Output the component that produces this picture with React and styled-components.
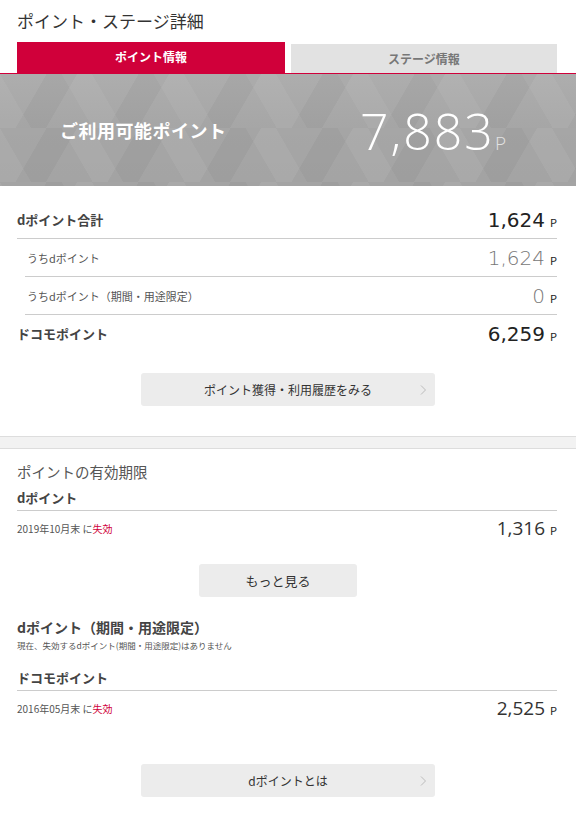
import React from 'react'
import styled, { createGlobalStyle } from 'styled-components'

const GlobalStyle = createGlobalStyle`
	body {
		margin: 0;
		background: #fff;
		font-family: 'Noto Sans CJK JP', 'Noto Sans', sans-serif;
		color: #333;
	}
`

const Page = styled.div`
	width: 576px;
	padding-bottom: 20px;
`
const Header = styled.header`
	padding: 9px 19px 0 17px;
	border-bottom: 1px solid #d0003a;
`
const PageTitle = styled.h1`
	margin: 0 0 9px;
	font-size: 17px;
	line-height: 24px;
	font-weight: 400;
	color: #333;
`
const Tabs = styled.div`
	display: grid;
	grid-template-columns: 268px 1fr;
	gap: 6px;
	align-items: end;
`
const Tab = styled.div`
	height: ${(p) => (p.active ? '31px' : '29px')};
	line-height: 29px;
	text-align: center;
	font-size: 12px;
	font-weight: 700;
	background: ${(p) => (p.active ? '#d0003a' : '#e2e2e2')};
	color: ${(p) => (p.active ? '#fff' : '#777')};
`
const Hero = styled.div`
	height: 112px;
	display: flex;
	align-items: center;
	justify-content: space-between;
	padding: 0 70px 0 60px;
	background-color: #a9a9a9;
	background-image:
		linear-gradient(60deg, rgba(255, 255, 255, 0.05) 25%, transparent 25.5%, transparent 75%, rgba(255, 255, 255, 0.05) 75.5%),
		linear-gradient(120deg, rgba(0, 0, 0, 0.035) 25%, transparent 25.5%, transparent 75%, rgba(0, 0, 0, 0.035) 75.5%),
		linear-gradient(180deg, rgba(255, 255, 255, 0.05), rgba(0, 0, 0, 0.02) 50%, rgba(0, 0, 0, 0.03));
	background-size: 92px 54px, 92px 54px, 100% 100%;
	background-position: 0 0, 46px 0, 0 0;
`
const HeroLabel = styled.span`
	font-size: 18px;
	font-weight: 700;
	color: #fff;
	letter-spacing: 0.5px;
`
const HeroValue = styled.span`
	font-family: 'Open Sans', 'Liberation Sans', sans-serif;
	font-weight: 300;
	font-size: 50px;
	letter-spacing: 2px;
	color: #fff;
	line-height: 1;
	padding-top: 2px;
`
const HeroUnit = styled.span`
	font-size: 19px;
	letter-spacing: 0;
	color: #e2e2e2;
`
const Totals = styled.section`
	padding: 15px 19px 0 17px;
`
const Row = styled.div`
	display: flex;
	justify-content: space-between;
	align-items: center;
	height: ${(p) => (p.h ? p.h : 37)}px;
	margin-left: ${(p) => (p.sub ? '8px' : '0')};
	border-bottom: ${(p) => (p.last ? 'none' : '1px solid #ccc')};
`
const Label = styled.span`
	font-size: ${(p) => (p.sub ? '11px' : '13px')};
	font-weight: ${(p) => (p.sub ? 400 : 700)};
	color: ${(p) => (p.sub ? '#555' : '#444')};
	padding-left: ${(p) => (p.sub ? '2px' : '0')};
`
const Value = styled.span`
	font-family: 'DejaVu Sans', Verdana, sans-serif;
	font-size: 20px;
	font-weight: ${(p) => (p.muted ? 200 : 400)};
	color: ${(p) => (p.muted ? '#777' : '#222')};
`
const ExpiryValue = styled.span`
	font-family: 'Open Sans', 'Liberation Sans', sans-serif;
	font-size: 19px;
	color: #333;
`
const Unit = styled.span`
	font-size: 11px;
	margin-left: 5px;
	color: #222;
`
const ButtonWrap = styled.div`
	display: flex;
	justify-content: center;
	margin-top: ${(p) => p.top}px;
	padding-right: ${(p) => p.shift || 0}px;
`
const LinkButton = styled.button`
	position: relative;
	width: ${(p) => p.w}px;
	height: 33px;
	border: none;
	border-radius: 3px;
	background: #ececec;
	font-family: inherit;
	font-size: ${(p) => p.fs || 12}px;
	color: #333;
	cursor: pointer;
`
const Chevron = styled.span`
	position: absolute;
	right: 8px;
	top: 50%;
	transform: translateY(-50%);
	display: flex;
`
const Divider = styled.div`
	margin-top: 30px;
	height: 11px;
	background: #f2f2f2;
	border-top: 1px solid #ddd;
	border-bottom: 1px solid #ddd;
`
const Expiry = styled.section`
	padding: 12px 19px 0 17px;
`
const ExpiryTitle = styled.h2`
	margin: 0;
	font-size: 14.5px;
	line-height: 22px;
	font-weight: 400;
	color: #555;
`
const GroupHead = styled.h3`
	margin: ${(p) => p.top || 0}px 0 0;
	font-size: ${(p) => (p.lg ? 14 : 13)}px;
	line-height: 20px;
	font-weight: 700;
	color: #444;
	padding-bottom: ${(p) => (p.lined ? 2 : 0)}px;
	border-bottom: ${(p) => (p.lined ? '1px solid #ccc' : 'none')};
`
const Note = styled.p`
	margin: 2px 0 0;
	font-size: 8.5px;
	line-height: 12px;
	color: #555;
`
const DateText = styled.span`
	font-size: 10px;
	color: #555;
`
const Lapse = styled.span`
	color: #d0003a;
`

function ChevronIcon() {
	return (
		<svg width='7' height='11' viewBox='0 0 7 11'>
			<path d='M1 1l4.5 4.5L1 10' fill='none' stroke='#bbb' strokeWidth='1' />
		</svg>
	)
}

export default function App() {
	const totals = [
		{ label: 'dポイント合計', value: '1,624' },
		{ label: 'うちdポイント', value: '1,624', sub: true },
		{ label: 'うちdポイント（期間・用途限定）', value: '0', sub: true },
		{ label: 'ドコモポイント', value: '6,259', last: true }
	]
	return (
		<Page>
			<GlobalStyle />
			<Header>
				<PageTitle>ポイント・ステージ詳細</PageTitle>
				<Tabs>
					<Tab active>ポイント情報</Tab>
					<Tab>ステージ情報</Tab>
				</Tabs>
			</Header>
			<Hero>
				<HeroLabel>ご利用可能ポイント</HeroLabel>
				<HeroValue>
					7,883<HeroUnit>P</HeroUnit>
				</HeroValue>
			</Hero>
			<Totals>
				{totals.map((item) => (
					<Row key={item.label} sub={item.sub} last={item.last}>
						<Label sub={item.sub}>{item.label}</Label>
						<span>
							<Value muted={item.sub}>{item.value}</Value>
							<Unit>P</Unit>
						</span>
					</Row>
				))}
			</Totals>
			<ButtonWrap top={21}>
				<LinkButton w={294}>
					ポイント獲得・利用履歴をみる
					<Chevron>
						<ChevronIcon />
					</Chevron>
				</LinkButton>
			</ButtonWrap>
			<Divider />
			<Expiry>
				<ExpiryTitle>ポイントの有効期限</ExpiryTitle>
				<GroupHead top={5} lined>dポイント</GroupHead>
				<Row h={34} last>
					<DateText>
						2019年10月末 に<Lapse>失効</Lapse>
					</DateText>
					<span>
						<ExpiryValue>1,316</ExpiryValue>
						<Unit>P</Unit>
					</span>
				</Row>
				<ButtonWrap top={19} shift={18}>
					<LinkButton w={158} fs={13}>もっと見る</LinkButton>
				</ButtonWrap>
				<GroupHead top={20} lg>dポイント（期間・用途限定）</GroupHead>
				<Note>現在、失効するdポイント(期間・用途限定)はありません</Note>
				<GroupHead top={17} lined>ドコモポイント</GroupHead>
				<Row h={34} last>
					<DateText>
						2016年05月末 に<Lapse>失効</Lapse>
					</DateText>
					<span>
						<ExpiryValue>2,525</ExpiryValue>
						<Unit>P</Unit>
					</span>
				</Row>
			</Expiry>
			<ButtonWrap top={39}>
				<LinkButton w={294}>
					dポイントとは
					<Chevron>
						<ChevronIcon />
					</Chevron>
				</LinkButton>
			</ButtonWrap>
		</Page>
	)
}
